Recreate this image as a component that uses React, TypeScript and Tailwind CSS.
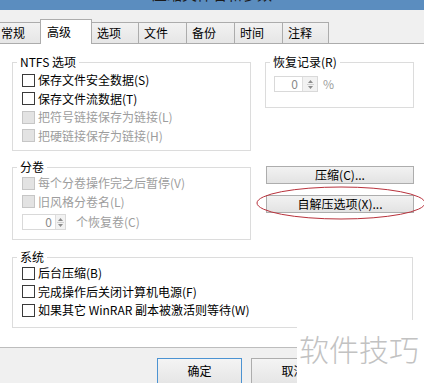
import clsx from "clsx"

type Row = { label: string; disabled?: boolean }

const ntfsRows: Row[] = [
  { label: "保存文件安全数据(S)" },
  { label: "保存文件流数据(T)" },
  { label: "把符号链接保存为链接(L)", disabled: true },
  { label: "把硬链接保存为链接(H)", disabled: true },
]

const systemRows: Row[] = [
  { label: "后台压缩(B)" },
  { label: "完成操作后关闭计算机电源(F)" },
  { label: "如果其它 WinRAR 副本被激活则等待(W)" },
]

const tabs = ["常规", "高级", "选项", "文件", "备份", "时间", "注释"]

function Check({ label, disabled }: Row) {
  return (
    <div className="flex h-[18.5px] items-center gap-[3px]">
      <span
        className={clsx(
          "h-[13px] w-[13px] shrink-0 border",
          disabled ? "border-[#c6c6c6] bg-[#e3e3e3]" : "border-[#3a3a3a] bg-white"
        )}
      />
      <span className={clsx("whitespace-nowrap leading-[14px]", disabled ? "text-[#9d9d9d]" : "text-black")}>
        {label}
      </span>
    </div>
  )
}

function SpinArrows() {
  return (
    <svg width="7" height="11" viewBox="0 0 7 11">
      <path d="M3.5 1 L6 4 L1 4 Z" fill="#8c8c8c" />
      <path d="M1 7 L6 7 L3.5 10 Z" fill="#8c8c8c" />
      <line x1="0" y1="5.5" x2="7" y2="5.5" stroke="#d0d0d0" />
    </svg>
  )
}

function Group({ title, children, className }: { title: string; children: React.ReactNode; className?: string }) {
  return (
    <fieldset className={clsx("m-0 border border-[#dcdcdc] p-0", className)}>
      <legend className="ml-[4px] px-[3px] leading-[14px] text-black">{title}</legend>
      {children}
    </fieldset>
  )
}

function PushButton({ label }: { label: string }) {
  return (
    <div className="flex h-[18px] items-center justify-center border border-[#adadad] bg-gradient-to-b from-[#f2f2f2] to-[#e3e3e3] leading-[14px] text-black">
      {label}
    </div>
  )
}

export default function App() {
  return (
    <div className="relative h-[383px] w-[424px] overflow-hidden bg-[#f0f0f0] font-['Noto_Sans_CJK_SC',sans-serif] text-[12px]">
      {/* window caption, mostly cropped */}
      <div className="flex h-[10px] justify-center overflow-hidden bg-[#5b8dbf]">
        <span className="mt-[-14px] whitespace-nowrap text-[15px] leading-[15px] text-[#1b1b1b]">压缩文件名和参数</span>
      </div>

      {/* tab strip */}
      <div className="flex h-[34px] items-end">
        {tabs.map((t, i) => (
          <div
            key={t}
            className={clsx(
              "flex shrink-0 items-center border-x border-t border-[#acacac] leading-[14px] text-black",
              i === 0 && "ml-[-8px] w-[49px] pl-[8px]",
              i > 0 && "ml-[-1px]",
              i === 1 ? "relative z-10 h-[25px] w-[52px] bg-white pl-[6px]" : "h-[22px] border-b bg-gradient-to-b from-[#f2f2f2] to-[#e6e6e6]",
              i === 2 && "w-[48px] pl-[5px]",
              i > 2 && i < 6 && "w-[49px] pl-[5px]",
              i === 6 && "w-[47px] pl-[5px]"
            )}
          >
            {t}
          </div>
        ))}
        <div className="h-px flex-1 bg-[#acacac]" />
      </div>

      {/* tab page */}
      <div className="h-[303px] bg-white pl-[12px] pt-[11px]">
        <div className="flex gap-[14px]">
          <div className="flex w-[239px] flex-col">
            <Group title="NTFS 选项">
              <div className="pb-[5px] pl-[9px] pt-[2px]">
                {ntfsRows.map((r) => (
                  <Check key={r.label} {...r} />
                ))}
              </div>
            </Group>

            <Group title="分卷" className="mt-[9px]">
              <div className="pb-[9px] pl-[9px] pt-0">
                <Check label="每个分卷操作完之后暂停(V)" disabled />
                <Check label="旧风格分卷名(L)" disabled />
                <div className="mt-[3px] flex items-center">
                  <div className="flex h-[16px] w-[44px] items-center border border-[#d9d9d9] bg-white">
                    <span className="flex-1 pr-[3px] text-right leading-[14px] text-[#8a8a8a]">0</span>
                    <span className="flex h-full w-[10px] items-center justify-center border-l border-[#dedede] bg-[#f2f2f2]">
                      <SpinArrows />
                    </span>
                  </div>
                  <span className="ml-[10px] leading-[14px] text-[#9d9d9d]">个恢复卷(C)</span>
                </div>
              </div>
            </Group>
          </div>

          <div className="flex w-[149px] flex-col">
            <Group title="恢复记录(R)">
              <div className="flex items-center pb-[15px] pl-[8px] pt-[7px]">
                <div className="flex h-[16px] w-[44px] items-center border border-[#d9d9d9] bg-white">
                  <span className="flex-1 pr-[4px] text-right leading-[14px] text-[#8a8a8a]">0</span>
                  <span className="flex h-full w-[15px] items-center justify-center border-l border-[#dedede] bg-[#f2f2f2]">
                    <SpinArrows />
                  </span>
                </div>
                <span className="ml-[5px] leading-[14px] text-[#9d9d9d]">%</span>
              </div>
            </Group>

            <div className="ml-px mt-[58px] flex flex-col gap-[11px]">
              <PushButton label="压缩(C)..." />
              <PushButton label="自解压选项(X)..." />
            </div>
          </div>
        </div>

        <Group title="系统" className="mt-[10px] w-[401px]">
          <div className="pb-[7px] pl-[9px] pt-0">
            {systemRows.map((r) => (
              <Check key={r.label} {...r} />
            ))}
          </div>
        </Group>
      </div>

      {/* dialog buttons */}
      <div className="flex h-[36px] gap-[9px] border-t border-[#bdbdbd] pl-[157px] pt-[10px]">
        <div className="flex h-[27px] w-[85px] items-center justify-center border border-[#4c93d2] bg-gradient-to-b from-[#f4f4f4] to-[#e5e5e5] pb-[2px] leading-[14px] text-black">
          确定
        </div>
        <div className="flex h-[27px] w-[85px] items-center justify-center border border-[#adadad] bg-gradient-to-b from-[#f4f4f4] to-[#e5e5e5] pb-[2px] leading-[14px] text-black">
          取消
        </div>
      </div>

      {/* red annotation ellipse */}
      <svg className="pointer-events-none absolute left-[256px] top-[186px]" width="170" height="35" viewBox="0 0 170 35">
        <ellipse cx="85" cy="17" rx="84" ry="16" fill="none" stroke="#b8323c" strokeWidth="1" />
      </svg>

      {/* watermark */}
      <div className="absolute left-[297px] top-[320px] h-[63px] w-[127px] bg-white pl-[2px] pt-[13px]">
        <span className="whitespace-nowrap text-[30px] font-light leading-[30px] text-[#c2c2c2]">软件技巧</span>
      </div>
    </div>
  )
}
